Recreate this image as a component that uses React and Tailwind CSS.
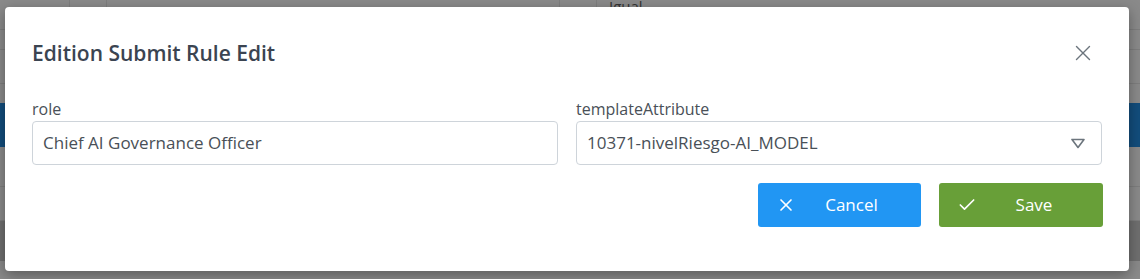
import { X, Check } from "lucide-react";

export default function App() {
  return (
    <div
      className="relative h-[279px] w-[1140px] overflow-hidden bg-[#8a8a8a]"
      style={{ fontFamily: '"Open Sans", "Noto Sans", sans-serif' }}
    >
      {/* dimmed page behind the dialog */}
      <div className="absolute inset-0">
        <div className="flex h-[30px] border-b border-[#7e7e7e]">
          <div className="w-[70px] border-r border-[#7e7e7e] pl-[40px] text-[#444]">∨</div>
          <div className="w-[37px] border-r border-[#7e7e7e]" />
          <div className="w-[453px] border-r border-[#7e7e7e]" />
          <div className="w-[37px] border-r border-[#7e7e7e]" />
          <div className="pl-[12px] text-[15px] leading-[12px] text-[#333]">Igual</div>
        </div>
        <div className="h-[20px] border-b border-[#7e7e7e]" />
        <div className="h-[34px] border-b border-[#7e7e7e]" />
        <div className="mt-[19px] h-[44px] bg-[#124d7c]" />
        <div className="h-[40px] border-b border-[#7e7e7e]" />
        <div className="h-[34px] border-b border-[#7e7e7e]" />
        <div className="h-[40px] bg-[#6f6f6f]" />
      </div>

      <div className="absolute left-[5px] top-[7px] h-[264px] w-[1124px] rounded-[4px] bg-white shadow-[0_4px_14px_rgba(0,0,0,0.35)]">
        <div className="flex items-center justify-between pl-[27px] pr-[33px] pt-[33px]">
          <h2 className="text-[21px] font-semibold leading-[26px] text-[#3b4451]">
            Edition Submit Rule Edit
          </h2>
          <X className="h-[26px] w-[26px] text-[#6c757d]" strokeWidth={1.3} />
        </div>

        <div className="mt-[33px] flex gap-[18px] px-[27px]">
          <div className="flex-1">
            <label className="block text-[16px] leading-[20px] text-[#495057]">role</label>
            <div className="mt-[2px] flex h-[44px] items-center rounded-[4px] border border-[#ced4da] px-[10px] text-[17px] text-[#495057]">
              Chief AI Governance Officer
            </div>
          </div>
          <div className="flex-1">
            <label className="block text-[16px] leading-[20px] text-[#495057]">templateAttribute</label>
            <div className="mt-[2px] flex h-[44px] items-center justify-between rounded-[4px] border border-[#ced4da] pl-[10px] pr-[16px] text-[17px] text-[#495057]">
              <span>10371-nivelRiesgo-AI_MODEL</span>
              <svg width="14" height="11" viewBox="0 0 14 11" fill="none">
                <path d="M1 1.5 H13 L7 9.5 Z" stroke="#6c757d" strokeWidth="1.6" strokeLinejoin="round" />
              </svg>
            </div>
          </div>
        </div>

        <div className="mt-[18px] flex justify-end gap-[18px] pr-[26px]">
          <button className="flex h-[44px] w-[163px] items-center rounded-[3px] bg-[#2196f3] pl-[18px] text-[17px] text-white">
            <X className="h-[20px] w-[20px]" strokeWidth={2} />
            <span className="flex-1 pr-[14px] text-center">Cancel</span>
          </button>
          <button className="flex h-[44px] w-[164px] items-center rounded-[3px] bg-[#689f38] pl-[18px] text-[17px] text-white">
            <Check className="h-[20px] w-[20px]" strokeWidth={2} />
            <span className="flex-1 pr-[12px] text-center">Save</span>
          </button>
        </div>
      </div>
    </div>
  );
}
